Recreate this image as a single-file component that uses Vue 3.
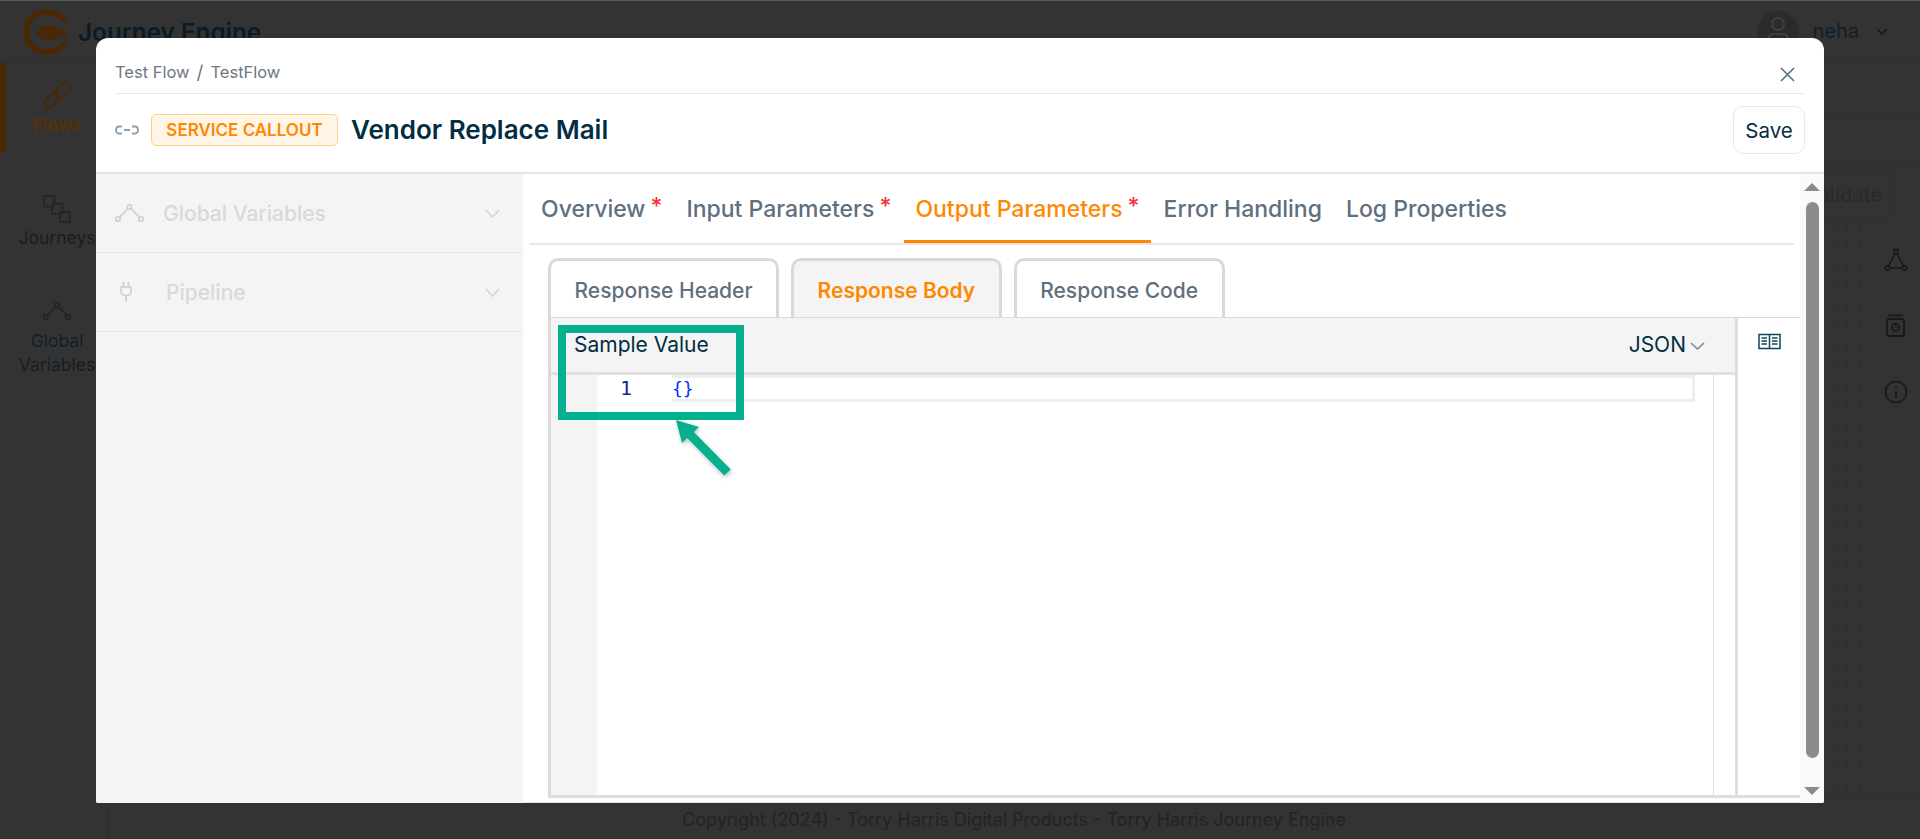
<script setup>
const tabs = [
  { label: 'Overview', req: true },
  { label: 'Input Parameters', req: true },
  { label: 'Output Parameters', req: true, active: true },
  { label: 'Error Handling' },
  { label: 'Log Properties' }
]
const subTabs = [
  { label: 'Response Header' },
  { label: 'Response Body', active: true },
  { label: 'Response Code' }
]
</script>

<template>
  <div class="page">
    <header class="top">
      <svg class="logo" width="46" height="46" viewBox="0 0 46 46" fill="none" stroke="#4a2804">
        <path d="M42 12 C38 6 31 3 23 3 C12 3 3 12 3 23 C3 34 12 43 23 43 C31 43 38 40 42 34" stroke-width="6" />
        <path d="M33 18.500 H19.500 L15.500 23.500 L19.500 29 H34" stroke-width="3.500" />
        <path d="M20 23.500 H43" stroke-width="7" />
      </svg>
      <span class="brand">Journey Engine</span>
      <span class="top-space"></span>
      <span class="avatar">
        <svg width="26" height="32" viewBox="0 0 26 32" fill="none" stroke="#404040" stroke-width="2">
          <circle cx="13" cy="8" r="6" />
          <path d="M3 28 V24 Q3 18 9 18 H17 Q23 18 23 24 V28" />
        </svg>
      </span>
      <span class="user">neha</span>
      <svg class="user-chev" width="12" height="8" viewBox="0 0 12 8" fill="none" stroke="#10191e" stroke-width="1.500"><path d="M1 1 L6 6 L11 1" /></svg>
    </header>

    <div class="work">
      <nav class="rail">
        <div class="rail-item on">
          <svg width="28" height="28" viewBox="0 0 28 28" fill="none" stroke="#4a2804" stroke-width="2">
            <rect x="11" y="4.500" width="17" height="9" rx="4" transform="rotate(-45 19.500 9)" />
            <rect x="0.500" y="14.500" width="17" height="9" rx="4" transform="rotate(-45 9 19)" />
          </svg>
          <span>Flows</span>
        </div>
        <div class="rail-item journeys">
          <svg width="28" height="28" viewBox="0 0 28 28" fill="none" stroke="#22262a" stroke-width="2">
            <rect x="1" y="1" width="10.500" height="10.500" rx="2" />
            <rect x="9" y="8.500" width="10.500" height="10.500" rx="2" />
            <rect x="17" y="17" width="10" height="10" rx="2" />
          </svg>
          <span>Journeys</span>
        </div>
        <div class="rail-item globals">
          <svg width="28" height="18" viewBox="0 0 28 18" fill="none" stroke="#22262a" stroke-width="1.800">
            <circle cx="14" cy="3" r="2.300" />
            <circle cx="3" cy="15" r="2.300" />
            <circle cx="25" cy="15" r="2.300" />
            <path d="M12.500 4.800 L4.500 13.200 M15.500 4.800 L23.500 13.200" />
          </svg>
          <span>Global Variables</span>
        </div>
      </nav>
      <main class="canvas">
        <div class="bar"></div>
        <div class="bar bar-mid"></div>
        <div class="bar bar-low"><span class="validate">Validate</span></div>
        <div class="stage">
          <div class="dots"></div>
          <aside class="tools">
            <svg width="24" height="24" viewBox="0 0 24 24" fill="none" stroke="#14191c" stroke-width="1.500">
              <circle cx="12" cy="3.500" r="2.300" /><circle cx="3.500" cy="20" r="2.300" /><circle cx="20.500" cy="20" r="2.300" />
              <path d="M11 5.500 L4.500 18 M13 5.500 L19.500 18 M5.800 20 H18.200" />
            </svg>
            <svg width="22" height="24" viewBox="0 0 22 24" fill="none" stroke="#14191c" stroke-width="1.800">
              <path d="M3 1.500 H18" />
              <rect x="2" y="5" width="17" height="17" rx="2" />
              <circle cx="10.500" cy="13.500" r="3.500" />
              <path d="M10.500 12 V13.500 H12" stroke-width="1" />
            </svg>
            <svg width="24" height="24" viewBox="0 0 24 24" fill="none" stroke="#14191c" stroke-width="1.500">
              <circle cx="12" cy="12" r="10.500" /><path d="M12 11 V18 M12 6.500 V8.500" />
            </svg>
          </aside>
        </div>
        <footer class="foot">Copyright (2024) - Torry Harris Digital Products - Torry Harris Journey Engine</footer>
      </main>
    </div>

    <section class="modal">
      <div class="crumbs">
        <span>Test Flow</span><span class="slash">/</span><span>TestFlow</span>
        <svg class="close" width="15" height="15" viewBox="0 0 15 15" fill="none" stroke="#4f7384" stroke-width="1.600"><path d="M1 1 L14 14 M14 1 L1 14" /></svg>
      </div>
      <div class="title-row">
        <svg class="link" width="24" height="10" viewBox="0 0 24 10" fill="none" stroke="#8ba0b0" stroke-width="1.800">
          <path d="M7 1.500 H4 Q1 1.500 1 5 Q1 8.500 4 8.500 H7 M9 5 H15 M17 1.500 H20 Q23 1.500 23 5 Q23 8.500 20 8.500 H17" />
        </svg>
        <span class="badge">SERVICE CALLOUT</span>
        <h1 class="title">Vendor Replace Mail</h1>
        <button class="save">Save</button>
      </div>

      <div class="modal-body">
        <aside class="side">
          <div class="side-row">
            <svg class="side-ic global" width="29" height="18" viewBox="0 0 29 18" fill="none" stroke="#c6d0da" stroke-width="1.600">
              <circle cx="14.500" cy="3" r="2.200" /><circle cx="3" cy="15" r="2.200" /><circle cx="26" cy="15" r="2.200" />
              <path d="M13 4.700 L4.500 13.300 M16 4.700 L24.500 13.300" />
            </svg>
            <span class="side-label">Global Variables</span>
            <svg class="side-chev" width="15" height="9" viewBox="0 0 15 9" fill="none" stroke="#cfd5dc" stroke-width="1.600"><path d="M1 1 L7.500 8 L14 1" /></svg>
          </div>
          <div class="side-row">
            <svg class="side-ic plug" width="12" height="20" viewBox="0 0 12 20" fill="none" stroke="#c6d0da" stroke-width="1.600">
              <path d="M3.500 0 V5 M8.500 0 V5 M1 5 H11 V9.500 Q11 13.500 6 13.500 Q1 13.500 1 9.500 Z M6 13.500 V20" />
            </svg>
            <span class="side-label pipe">Pipeline</span>
            <svg class="side-chev" width="15" height="9" viewBox="0 0 15 9" fill="none" stroke="#cfd5dc" stroke-width="1.600"><path d="M1 1 L7.500 8 L14 1" /></svg>
          </div>
        </aside>

        <div class="pane">
          <div class="tabs">
            <div v-for="t in tabs" :key="t.label" class="tab" :class="{ active: t.active }">
              {{ t.label }}<span v-if="t.req" class="req">*</span>
            </div>
          </div>
          <div class="subtabs">
            <div v-for="s in subTabs" :key="s.label" class="subtab" :class="{ active: s.active }">{{ s.label }}</div>
          </div>
          <div class="panel">
            <div class="editor">
              <div class="ed-head">
                <span class="ed-title">Sample Value</span>
                <span class="ed-type">JSON</span>
                <svg width="15" height="8" viewBox="0 0 15 8" fill="none" stroke="#6d8896" stroke-width="1.500"><path d="M1 1 L7.500 7 L14 1" /></svg>
              </div>
              <div class="ed-code">
                <div class="gutter"></div>
                <div class="num">1</div>
                <div class="line"><span class="brace">{}</span></div>
                <div class="ruler"></div>
              </div>
            </div>
            <div class="ed-side">
              <svg width="23" height="17" viewBox="0 0 23 17" fill="none" stroke="#0d4560" stroke-width="1.500">
                <path d="M1 1.500 H11.500 V15.500 H1 Z M11.500 1.500 H22 V15.500 H11.500" />
                <path d="M3.500 5 H9 M3.500 8 H9 M3.500 11 H9 M14 5 H19.500 M14 8 H19.500 M14 11 H19.500" stroke-width="1.300" />
              </svg>
            </div>
          </div>
        </div>

        <div class="scroll">
          <span class="arrow up"></span>
          <span class="thumb"></span>
          <span class="arrow down"></span>
        </div>
      </div>

      <div class="callout"></div>
      <svg class="pointer" width="70" height="70" viewBox="0 0 70 70">
        <path d="M6 5 L29 12 L23.800 17 L60.800 54.500 L54.200 60.500 L17.200 23 L12 28 Z" fill="#06b08f" />
      </svg>
    </section>
  </div>
</template>

<style>
html, body { margin: 0; padding: 0; background: #333; }
</style>

<style scoped>
.page {
  position: relative;
  width: 1920px;
  height: 839px;
  overflow: hidden;
  background: #333;
  font-family: Inter, "Liberation Sans", sans-serif;
  color: #10202a;
  display: flex;
  flex-direction: column;
}
.top {
  height: 63px;
  flex: none;
  display: flex;
  align-items: center;
  box-sizing: border-box;
  padding: 0 32px 0 23px;
  border-top: 1px solid #565656;
  border-bottom: 1px solid #2e2e2e;
}
.logo { flex: none; }
.brand { margin: 1px 0 0 9px; font-size: 24.300px; font-weight: 600; color: #0a1b25; }
.top-space { flex: 1; }
.avatar {
  width: 42px;
  height: 42px;
  border-radius: 50%;
  background: #2b2b2b;
  display: flex;
  align-items: center;
  justify-content: center;
  overflow: hidden;
}
.user { margin: -1px 0 0 13px; font-size: 20px; }
.user-chev { margin-left: 17px; }

.work { flex: 1; display: flex; min-height: 0; }
.rail { width: 108px; flex: none; border-right: 1px solid #2e2e2e; box-sizing: border-box; }
.rail-item {
  width: 114px;
  height: 90px;
  box-sizing: border-box;
  padding-top: 18px;
  display: flex;
  flex-direction: column;
  align-items: center;
  gap: 4px;
  text-align: center;
  font-size: 17.500px;
  line-height: 24px;
  color: #141f26;
}
.rail-item.on {
  box-shadow: inset 6px 0 0 #4a2804;
  color: #5a3006;
  font-weight: 600;
}
.rail-item.journeys { height: 97px; padding-top: 42px; gap: 3px; }
.rail-item.globals { height: 127px; padding-top: 52px; gap: 9px; }
.canvas { flex: 1; display: flex; flex-direction: column; min-width: 0; }
.bar { height: 52px; flex: none; box-sizing: border-box; border-bottom: 1px solid #2e2e2e; }
.bar-mid { height: 49px; }
.bar-low {
  height: 59px;
  display: flex;
  justify-content: flex-end;
  align-items: center;
  padding-right: 25px;
  border-bottom: 0;
}
.validate {
  padding: 0 12px;
  height: 48px;
  line-height: 48px;
  border: 1px solid #2f2f2f;
  border-radius: 8px;
  font-size: 20px;
  font-weight: 500;
  color: #2a2a2a;
  box-sizing: border-box;
}
.stage { flex: 1; display: flex; min-height: 0; }
.dots {
  flex: 1;
  background-image: radial-gradient(circle, #272727 1px, transparent 1.300px);
  background-size: 13.330px 13.330px;
}
.tools {
  width: 49px;
  flex: none;
  padding-top: 25px;
  display: flex;
  flex-direction: column;
  align-items: center;
  gap: 42px;
}
.foot {
  height: 41px;
  flex: none;
  border-top: 1px solid #2f2f2f;
  box-sizing: border-box;
  display: flex;
  align-items: center;
  justify-content: center;
  font-size: 18px;
  color: #1f2428;
}

.modal {
  position: absolute;
  left: 96px;
  top: 38px;
  width: 1728px;
  height: 765px;
  background: #fff;
  border-radius: 12px 12px 2px 2px;
  display: flex;
  flex-direction: column;
  overflow: hidden;
}
.crumbs {
  height: 56px;
  flex: none;
  margin: 0 19px;
  border-bottom: 1px solid #e9e9ee;
  display: flex;
  align-items: center;
  box-sizing: border-box;
  padding-top: 13px;
  font-size: 16.500px;
  color: #6e7783;
  position: relative;
}
.slash { margin: 0 7px; font-size: 19px; }
.close { position: absolute; right: 10px; top: 29px; }
.title-row {
  height: 80px;
  flex: none;
  padding: 0 19px 6px;
  display: flex;
  align-items: center;
  border-bottom: 2px solid #e4e4e4;
  box-sizing: border-box;
}
.link { flex: none; }
.badge {
  margin-left: 12px;
  width: 187px;
  height: 32px;
  box-sizing: border-box;
  border: 1px solid #ffcf87;
  border-radius: 5px;
  background: #fff5e6;
  color: #ff8800;
  font-size: 17px;
  font-weight: 600;
  display: flex;
  align-items: center;
  justify-content: center;
}
.title {
  margin: -1px 0 0 13px;
  font-size: 26px;
  font-weight: 600;
  color: #022d42;
  flex: 1;
}
.save {
  width: 72px;
  height: 48px;
  background: #fff;
  border: 1px solid #e6e8ec;
  border-radius: 10px;
  font-family: inherit;
  font-size: 20.500px;
  color: #022d42;
  padding: 0;
}
.modal-body { flex: 1; display: flex; min-height: 0; }
.side { width: 427px; flex: none; background: #f4f4f4; }
.side-row {
  height: 79px;
  box-sizing: border-box;
  border-bottom: 1px solid #e8e8e8;
  display: flex;
  align-items: center;
  padding: 0 23px 0 20px;
}
.side-ic { flex: none; }
.global { margin-left: -1px; }
.plug { margin-left: 4px; }
.side-label {
  margin-left: 19px;
  flex: 1;
  font-size: 21px;
  font-weight: 500;
  color: #d6d9de;
}
.side-label.pipe { margin-left: 34px; }
.pane {
  flex: 1;
  min-width: 0;
  padding-left: 6px;
  display: flex;
  flex-direction: column;
  border-bottom: 1px solid #e6e6e6;
}
.tabs {
  height: 71px;
  flex: none;
  margin-right: 6px;
  border-bottom: 2px solid #e6e6ec;
  box-sizing: border-box;
  display: flex;
  padding-left: 1px;
}
.tab {
  padding: 0 11px;
  height: 69px;
  box-sizing: border-box;
  display: flex;
  align-items: center;
  font-size: 23px;
  font-weight: 500;
  color: #5f6f7e;
  margin-right: 2px;
}
.tab.active {
  color: #ff8800;
  border-bottom: 3px solid #ff8800;
  padding-top: 3px;
}
.req { color: #f5333f; margin: -6px 0 0 5px; font-size: 23px; }
.subtabs { display: flex; gap: 12px; padding: 13px 0 0 19px; flex: none; }
.subtab {
  height: 59px;
  box-sizing: border-box;
  border: 3px solid #d9d9d9;
  border-bottom: 0;
  border-radius: 10px 10px 0 0;
  padding: 2px 23.500px 0;
  display: flex;
  align-items: center;
  font-size: 21px;
  font-weight: 500;
  color: #5f6f7e;
}
.subtab.active { background: #f4f4f4; color: #ff8800; font-weight: 600; }
.panel {
  flex: 1;
  margin-left: 19px;
  margin-bottom: 4px;
  border-top: 1px solid #d9d9d9;
  border-left: 3px solid #d9d9d9;
  border-bottom: 3px solid #dedede;
  display: flex;
  min-height: 0;
}
.editor { flex: 1; display: flex; flex-direction: column; min-width: 0; }
.ed-head {
  height: 57px;
  flex: none;
  box-sizing: border-box;
  background: #f4f4f4;
  border-bottom: 3px solid #e0e0e0;
  display: flex;
  align-items: flex-start;
  padding: 14px 30px 0 23px;
  font-size: 21px;
  color: #022d42;
}
.ed-title { flex: 1; }
.ed-type { margin-right: 4px; }
.ed-head svg { margin-top: 10px; }
.ed-code { flex: 1; display: flex; align-items: flex-start; min-height: 0; height: 100%; }
.gutter { width: 46px; align-self: stretch; flex: none; background: #f4f4f4; }
.num {
  width: 75px;
  flex: none;
  box-sizing: border-box;
  padding-left: 23px;
  font: 20px/27px "DejaVu Sans Mono", monospace;
  color: #0b2a8c;
}
.line {
  width: 1023px;
  height: 27px;
  flex: none;
  box-sizing: border-box;
  border: 3px solid #eeeeee;
  border-left: 0;
  font: 18px/21px "DejaVu Sans Mono", monospace;
  color: #0431fa;
}
.ruler { margin-left: 18px; width: 1px; align-self: stretch; background: #dcdcdc; }
.ed-side {
  width: 62px;
  flex: none;
  border-left: 3px solid #dedede;
  display: flex;
  justify-content: center;
  padding-top: 15px;
  align-items: flex-start;
}
.scroll {
  width: 24px;
  flex: none;
  background: #fafafa;
  display: flex;
  flex-direction: column;
  align-items: center;
  padding-top: 9px;
  box-sizing: border-box;
}
.arrow { width: 0; height: 0; border-left: 8px solid transparent; border-right: 8px solid transparent; flex: none; }
.up { border-bottom: 8px solid #8c8c8c; }
.down { border-top: 8px solid #8c8c8c; margin-top: 29px; }
.thumb { width: 13px; height: 556px; margin-top: 11px; border-radius: 7px; background: #8c8c8c; flex: none; }
.callout {
  position: absolute;
  left: 462px;
  top: 287px;
  width: 186px;
  height: 95px;
  box-sizing: border-box;
  border: 8px solid #06b08f;
}
.pointer {
  position: absolute;
  left: 574px;
  top: 377px;
  filter: drop-shadow(1px 2px 2px rgba(0, 0, 0, .25));
}
</style>
